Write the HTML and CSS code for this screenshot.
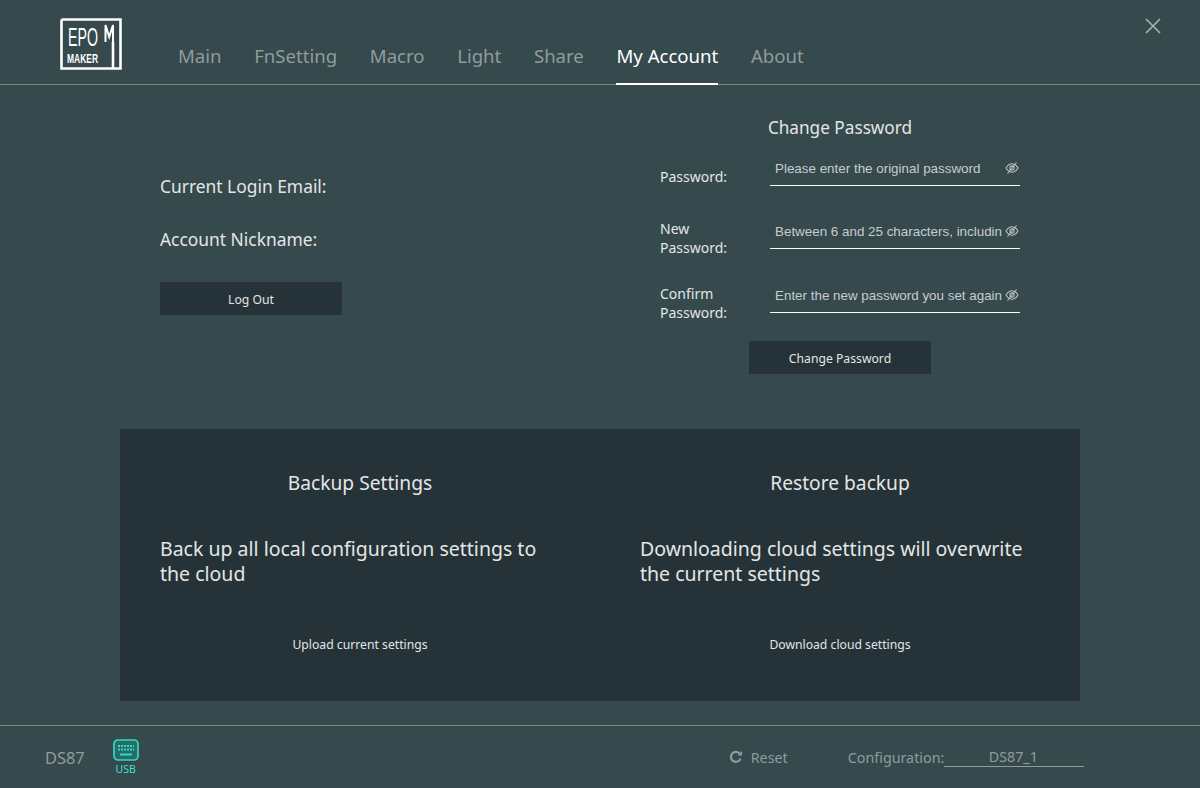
FILE: index.html
```html
<!DOCTYPE html>
<html lang="en">
<head>
    <meta charset="UTF-8">
    <title>EPOMAKER - My Account</title>
    <link rel="stylesheet" href="styles.css">
</head>
<body>
    <div class="app">
        <div class="header">
            <svg class="logo" width="62" height="52" viewBox="0 0 62 52">
                <path d="M1.5 1.5H60.5V50.5H53V24M1.5 1.5V50.5H53" fill="none" stroke="#fff" stroke-width="2.6"/>
                <path d="M45.5 24V7L49.2 19L53 7V25" fill="none" stroke="#fff" stroke-width="2"/>
                <text class="logo-big" x="8" y="27.5" textLength="30" lengthAdjust="spacingAndGlyphs">EPO</text>
                <text class="logo-small" x="7" y="45" textLength="31" lengthAdjust="spacingAndGlyphs">MAKER</text>
            </svg>
            <div class="nav">
                <a class="tab">Main</a>
                <a class="tab">FnSetting</a>
                <a class="tab">Macro</a>
                <a class="tab">Light</a>
                <a class="tab">Share</a>
                <a class="tab active">My Account</a>
                <a class="tab">About</a>
            </div>
            <svg class="close" width="16" height="16" viewBox="0 0 16 16">
                <path d="M1 1L15 15M15 1L1 15" stroke="#a9b3b5" stroke-width="1.6"/>
            </svg>
        </div>

        <div class="main">
            <div class="account">
                <div class="account-info">
                    <div class="info-line">Current Login Email:</div>
                    <div class="info-line">Account Nickname:</div>
                    <button class="btn">Log Out</button>
                </div>
                <div class="password">
                    <h3>Change Password</h3>
                    <div class="field first">
                        <label>Password:</label>
                        <div class="input">
                            <span>Please enter the original password</span>
                            <svg class="eye" width="14" height="14" viewBox="0 0 14 14"><use href="#eye-off"/></svg>
                        </div>
                    </div>
                    <div class="field">
                        <label>New<br>Password:</label>
                        <div class="input">
                            <span>Between 6 and 25 characters, includin</span>
                            <svg class="eye" width="14" height="14" viewBox="0 0 14 14"><use href="#eye-off"/></svg>
                        </div>
                    </div>
                    <div class="field last">
                        <label>Confirm<br>Password:</label>
                        <div class="input">
                            <span>Enter the new password you set again</span>
                            <svg class="eye" width="14" height="14" viewBox="0 0 14 14"><use href="#eye-off"/></svg>
                        </div>
                    </div>
                    <button class="btn">Change Password</button>
                </div>
            </div>

            <div class="backup">
                <div class="backup-col">
                    <h3>Backup Settings</h3>
                    <p>Back up all local configuration settings to the cloud</p>
                    <button class="btn">Upload current settings</button>
                </div>
                <div class="backup-col">
                    <h3>Restore backup</h3>
                    <p>Downloading cloud settings will overwrite the current settings</p>
                    <button class="btn">Download cloud settings</button>
                </div>
            </div>
        </div>

        <div class="footer">
            <span class="device">DS87</span>
            <div class="usb">
                <svg width="26" height="22" viewBox="0 0 26 22">
                    <rect x="1" y="1" width="24" height="20" rx="4" fill="#2b6a68" stroke="#2fdcc2" stroke-width="1.7"/>
                    <path d="M5 7H21M5 10.5H21" stroke="#2fdcc2" stroke-width="1.8" stroke-dasharray="2 1"/>
                    <path d="M7 15.5H19" stroke="#2fdcc2" stroke-width="2"/>
                </svg>
                <span>USB</span>
            </div>
            <div class="reset">
                <svg width="14" height="14" viewBox="0 0 14 14">
                    <path d="M11.6 8.6A5 5 0 1 1 10.4 3.2" fill="none" stroke="#8f9c9e" stroke-width="2.2"/>
                    <path d="M8.4 5.6H13V1Z" fill="#8f9c9e"/>
                </svg>
                <span>Reset</span>
            </div>
            <div class="config">
                <span>Configuration:</span>
                <span class="config-value">DS87_1</span>
            </div>
        </div>
    </div>

    <svg width="0" height="0" class="defs">
        <symbol id="eye-off" viewBox="0 0 14 14">
            <path d="M1 7C3 3.8 5 2.8 7 2.8S11 3.8 13 7C11 10.2 9 11.2 7 11.2S3 10.2 1 7Z" fill="none" stroke="#b9c2c3" stroke-width="1.1"/>
            <circle cx="7" cy="7" r="2.1" fill="none" stroke="#b9c2c3" stroke-width="1.1"/>
            <path d="M2.5 12.5L11.5 1.5" stroke="#b9c2c3" stroke-width="1.1"/>
        </symbol>
    </svg>
</body>
</html>
```

FILE: styles.css
```css
* {
    box-sizing: border-box;
}
body {
    margin: 0;
    background: #36494d;
    font-family: "Noto Sans", "Open Sans", sans-serif;
    color: #e3e6e6;
}
h3 {
    margin: 0;
    font-size: 17.2px;
    font-weight: 400;
    text-align: center;
}
.app {
    width: 1200px;
    height: 788px;
    display: flex;
    flex-direction: column;
    overflow: hidden;
}
.defs {
    position: absolute;
}

.header {
    height: 85px;
    flex: none;
    display: flex;
    padding-left: 60px;
    border-bottom: 1px solid #78878a;
    position: relative;
}
.logo {
    margin-top: 18px;
    overflow: visible;
}
.logo-big {
    font-family: "Liberation Sans", sans-serif;
    font-size: 25.5px;
    fill: #fff;
}
.logo-small {
    font-family: "Liberation Sans", sans-serif;
    font-size: 13px;
    font-weight: 700;
    fill: #fff;
}
.nav {
    display: flex;
    gap: 32.6px;
    margin-left: 56px;
    height: 85px;
}
.tab {
    padding-top: 42px;
    height: 85px;
    font-size: 18.6px;
    line-height: 28px;
    color: #8f9c9e;
}
.tab.active {
    color: #fff;
    border-bottom: 2px solid #fff;
}
.close {
    position: absolute;
    right: 39px;
    top: 18px;
}

.main {
    flex: 1;
    display: flex;
    flex-direction: column;
    align-items: center;
}
.account {
    width: 1200px;
    height: 344px;
    flex: none;
    display: flex;
    padding-left: 160px;
}
.account-info {
    width: 500px;
    padding-top: 87px;
}
.info-line {
    font-size: 17.4px;
    line-height: 28px;
    margin-bottom: 25px;
}
.btn {
    display: block;
    width: 182px;
    height: 33px;
    padding: 2px 0 0;
    border: 0;
    background: #253237;
    color: #e3e6e6;
    font-family: "Noto Sans", sans-serif;
    font-size: 12.2px;
}
.account-info .btn {
    margin-top: 29px;
}

.password {
    width: 360px;
    padding-top: 29px;
}
.password h3 {
    line-height: 28px;
    margin-bottom: 8px;
}
.password .btn {
    margin: 28px 0 0 89px;
}
.field {
    height: 63px;
    display: flex;
    align-items: flex-end;
}
.field.first {
    height: 36px;
}
.field.last {
    height: 64px;
}
.field label {
    width: 110px;
    font-size: 14px;
    line-height: 19px;
    margin-bottom: -8px;
}
.field.first label {
    margin-bottom: 0;
}
.field.last label {
    margin-bottom: -9px;
}
.input {
    width: 250px;
    height: 32px;
    display: flex;
    align-items: center;
    justify-content: space-between;
    padding: 0 1px 3px 5px;
    border-bottom: 1px solid #fff;
    font-family: "Liberation Sans", sans-serif;
    font-size: 13.4px;
    color: #c6cdce;
    white-space: nowrap;
}
.eye {
    flex: none;
}

.backup {
    width: 960px;
    height: 272px;
    flex: none;
    display: flex;
    background: #253237;
}
.backup-col {
    width: 480px;
    padding: 40px 40px 0;
}
.backup-col h3 {
    font-size: 19.2px;
    line-height: 28px;
    margin-bottom: 39px;
}
.backup-col p {
    margin: 0;
    height: 50px;
    font-size: 19.5px;
    line-height: 25px;
}
.backup-col .btn {
    margin: 41px auto 0;
    width: 400px;
    background: none;
    line-height: 24px;
}

.footer {
    height: 63px;
    flex: none;
    display: flex;
    align-items: center;
    padding-left: 45px;
    border-top: 1px solid #78878a;
    color: #8f9c9e;
    font-size: 14.3px;
}
.device {
    font-size: 16.4px;
}
.usb {
    margin-left: 28px;
    display: flex;
    flex-direction: column;
    align-items: center;
    color: #35e6cc;
    font-size: 10.5px;
    line-height: 13px;
    gap: 2px;
}
.usb svg {
    display: block;
}
.reset {
    margin-left: 590px;
    display: flex;
    align-items: center;
    gap: 8px;
}
.config {
    margin-left: 60px;
    display: flex;
    align-items: center;
}
.config-value {
    width: 140px;
    padding-right: 2px;
    text-align: center;
    border-bottom: 1px solid #8f9c9e;
    line-height: 18px;
}
```
